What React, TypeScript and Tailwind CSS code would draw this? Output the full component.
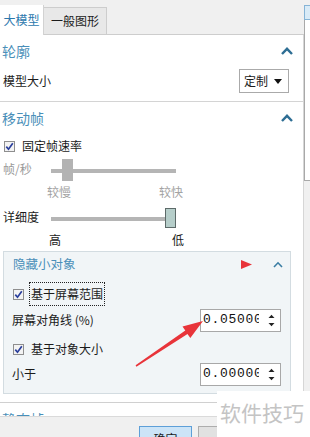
import type { ReactNode } from 'react';

function Chevron({ small }: { small?: boolean }) {
  return small ? (
    <svg width="10" height="7" viewBox="0 0 10 7">
      <path d="M1 6 L5 1.8 L9 6" fill="none" stroke="#3a7da3" strokeWidth="1.6" />
    </svg>
  ) : (
    <svg width="12" height="8" viewBox="0 0 12 8">
      <path d="M1 7 L6 1.8 L11 7" fill="none" stroke="#2e6e94" strokeWidth="2.4" />
    </svg>
  );
}

function CheckBox() {
  return (
    <span className="flex h-[11px] w-[11px] shrink-0 items-center justify-center border border-[#8e8e8e] bg-[#f3f3f3]">
      <svg width="9" height="9" viewBox="0 0 9 9">
        <path d="M1.3 4.6 L3.5 7.2 L7.8 1.2" fill="none" stroke="#2a3f9c" strokeWidth="1.7" />
      </svg>
    </span>
  );
}

function Header({ children }: { children: ReactNode }) {
  return (
    <div className="flex h-[32px] items-center justify-between pl-[2px] pr-[10px]">
      <span className="text-[14px] text-[#4a8fb9]">{children}</span>
      <Chevron />
    </div>
  );
}

function Slider({ width, thumbLeft, active }: { width: number; thumbLeft: number; active?: boolean }) {
  return (
    <div className="relative h-[24px]" style={{ width }}>
      <div className="absolute left-0 right-0 top-[11px] h-[4px] bg-[#b5b5b5]" />
      <div
        className={
          active
            ? 'absolute top-[2px] h-[20px] w-[11px] border border-[#5d6a69] bg-[#b6ceca]'
            : 'absolute top-[1px] h-[22px] w-[11px] bg-[#b3b3b3]'
        }
        style={{ left: thumbLeft }}
      />
    </div>
  );
}

function Spin() {
  return (
    <svg width="7" height="13" viewBox="0 0 7 13" className="shrink-0">
      <path d="M0.5 4 L3.5 0.8 L6.5 4 Z" fill="#222" />
      <path d="M0.5 9 L3.5 12.2 L6.5 9 Z" fill="#222" />
    </svg>
  );
}

function NumberBox({ value }: { value: string }) {
  return (
    <div className="flex h-[23px] w-[81px] items-center border border-[#a8a8a8] bg-white pl-[2px] pr-[5px]">
      <span className="w-[56px] overflow-hidden whitespace-nowrap font-['Liberation_Mono',monospace] text-[13px] tracking-[0.7px] text-[#111]">
        {value}
      </span>
      <span className="flex-1" />
      <Spin />
    </div>
  );
}

export default function App() {
  return (
    <div className="relative flex h-[437px] w-[310px] flex-col overflow-hidden bg-[#f0f0f0] font-['Noto_Sans_CJK_SC',sans-serif] text-[12px] text-[#1b1b1b]">
      <div className="flex h-[416px]">
        <div className="flex w-[304px] flex-col">
          {/* tabs */}
          <div className="flex h-[35px] items-end">
            <div className="flex h-[30px] w-[44px] items-center justify-center border-r border-[#d2d2d2] bg-white text-[12px] text-[#2c78ad]">
              大模型
            </div>
            <div className="flex h-[28px] w-[63px] items-center justify-center border border-l-0 border-[#cdcdcd] bg-[#e8e8e8] text-[12px]">
              一般图形
            </div>
            <div className="h-full flex-1 border-b border-[#cdcdcd]" />
          </div>

          {/* panel */}
          <div className="flex-1 overflow-hidden border-r border-[#d6d6d6] bg-white">
            <div className="border-b border-[#d4d4d4]">
              <Header>轮廓</Header>
              <div className="flex h-[28px] items-center justify-between pl-[3px] pr-[14px]">
                <span>模型大小</span>
                <div className="flex h-[24px] w-[50px] items-center justify-between border border-[#aaaaaa] bg-white pl-[4px] pr-[6px]">
                  <span>定制</span>
                  <svg width="8" height="5" viewBox="0 0 8 5">
                    <path d="M0 0 L8 0 L4 5 Z" fill="#111" />
                  </svg>
                </div>
              </div>
              <div className="h-[6px]" />
            </div>

            <Header>移动帧</Header>
            <div className="flex h-[24px] items-center gap-[7px] pl-[4px]">
              <CheckBox />
              <span>固定帧速率</span>
            </div>
            <div className="flex h-[24px] items-center">
              <span className="w-[51px] pb-[3px] pl-[3px] text-[#9a9a9a]">帧/秒</span>
              <Slider width={125} thumbLeft={11} />
            </div>
            <div className="flex h-[20px] items-center text-[#a3a3a3]">
              <span className="ml-[47px]">较慢</span>
              <span className="ml-[88px]">较快</span>
            </div>
            <div className="mt-[4px] flex h-[24px] items-center">
              <span className="w-[51px] pb-[3px] pl-[3px]">详细度</span>
              <Slider width={125} thumbLeft={114} active />
            </div>
            <div className="flex h-[20px] items-center">
              <span className="ml-[49px]">高</span>
              <span className="ml-[111px]">低</span>
            </div>

            {/* hidden small objects */}
            <div className="ml-[3px] mt-[1px] w-[288px] border border-[#d3dce1] bg-[#f1f5f7] pb-[7px]">
              <div className="flex h-[24px] items-center pl-[9px] pr-[7px]">
                <span className="text-[12.5px] text-[#4a8fb9]">隐藏小对象</span>
                <span className="flex-1" />
                <svg width="11" height="9" viewBox="0 0 11 9" className="mr-[21px]">
                  <path d="M0 0 L11 4.5 L0 9 Z" fill="#e8343a" />
                </svg>
                <Chevron small />
              </div>
              <div className="mt-[6px] flex h-[24px] items-center gap-[5px] pl-[9px]">
                <CheckBox />
                <span className="border border-dotted border-[#222] px-[1px] py-[2px]">基于屏幕范围</span>
              </div>
              <div className="mt-[2px] flex h-[24px] items-center justify-between pl-[8px] pr-[9px]">
                <span>屏幕对角线 (%)</span>
                <NumberBox value="0.050000" />
              </div>
              <div className="mt-[5px] flex h-[24px] items-center gap-[7px] pl-[9px]">
                <CheckBox />
                <span>基于对象大小</span>
              </div>
              <div className="mt-[1px] flex h-[24px] items-center justify-between pl-[8px] pr-[9px]">
                <span>小于</span>
                <NumberBox value="0.000000" />
              </div>
            </div>

            <div className="mt-[8px] w-[300px] border-b border-[#d0d0d0]" />
            <Header>静态帧</Header>
          </div>
        </div>

        {/* right strip */}
        <div className="flex w-[6px] flex-col pt-[5px]">
          <div className="h-[15px] border border-r-0 border-[#86b4d6] bg-[#d9ebf7]" />
          <div className="h-[161px] border border-r-0 border-t-0 border-[#a9a9a9] bg-white" />
        </div>
      </div>

      {/* footer */}
      <div className="flex h-[21px] items-start border-t border-[#dadada] pl-[139px] pt-[9px]">
        <div className="flex h-[24px] w-[53px] justify-center border border-[#5d9fd8] bg-[#cce4f7] pt-[3px]">确定</div>
        <div className="ml-[6px] h-[24px] w-[40px] border border-[#adadad] bg-[#e1e1e1]" />
      </div>

      {/* watermark */}
      <div className="absolute left-[217px] top-[391px] flex h-[46px] w-[93px] items-start bg-white pl-[3px] pt-[8px]">
        <span className="text-[21px] leading-[26px] text-[#c4c4c4]">软件技巧</span>
      </div>

      {/* red annotation arrow */}
      <svg className="pointer-events-none absolute left-0 top-0" width="310" height="437" viewBox="0 0 310 437">
        <polygon
          points="203,321 182.5,326.4 185.3,330.5 135.6,365.3 136.4,366.7 187.5,333.9 190.3,338"
          fill="#e8343a"
        />
      </svg>
    </div>
  );
}
